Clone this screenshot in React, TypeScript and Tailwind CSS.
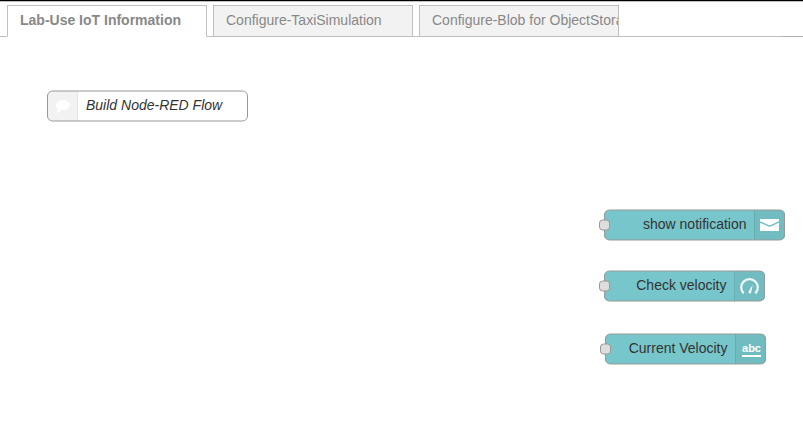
import type { ReactNode } from "react";

type TabProps = { label: string; active?: boolean };

function Tab({ label, active }: TabProps) {
  return (
    <div
      className={`h-8 w-[200px] shrink-0 overflow-hidden whitespace-nowrap border border-[#bfbfbf] pl-3 leading-[29px] ${
        active ? "border-b-white bg-white font-bold" : "bg-[#f2f2f2]"
      }`}
    >
      {label}
    </div>
  );
}

function NodeOutline({ width }: { width: number }) {
  return (
    <svg width={width} height="32" className="pointer-events-none absolute inset-0" fill="none" stroke="#999999">
      <rect x="0.5" y="1" width={width - 1} height="30" rx="5" />
    </svg>
  );
}

function Port() {
  return (
    <svg width="11" height="12" viewBox="0 0 11 12" className="absolute top-[10px] -left-[5px]">
      <rect x="0.5" y="1" width="10" height="10" rx="3" fill="#dddddd" stroke="#999999" />
    </svg>
  );
}

type NodeProps = { label: string; place: string; width: number; icon: ReactNode };

function WidgetNode({ label, place, width, icon }: NodeProps) {
  return (
    <div className={`absolute h-8 py-px ${place}`}>
      <div className="flex h-[30px] overflow-hidden rounded-[5px] bg-[#77c6cb]">
        <div className="flex-1 pr-[7.5px] text-right leading-[29px] whitespace-nowrap text-[#333333]">
          {label}
        </div>
        <div className="w-[31px] border-l border-[#68adb2] bg-[#71bcc1]">{icon}</div>
      </div>
      <NodeOutline width={width} />
      <Port />
    </div>
  );
}

function EnvelopeIcon() {
  return (
    <svg width="30" height="30" viewBox="0 0 30 30">
      <path d="M5 9h19v2.200l-9.500 4.200L5 11.200z" fill="#fff" />
      <path d="M5 12.700l9.500 4.300 9.500-4.300V21H5z" fill="#fff" />
    </svg>
  );
}

function GaugeIcon() {
  return (
    <svg width="30" height="30" viewBox="0 0 30 30" fill="none" stroke="#f1f8f9">
      <path d="M8.700 22.400A8.300 8.300 0 1 1 20.300 22.400" strokeWidth="2.200" />
      <path d="M17.800 13.500L16.200 21.300a1.400 1.400 0 1 1-2.500-1.100z" fill="#f1f8f9" stroke="none" />
    </svg>
  );
}

function AbcIcon() {
  return (
    <div className="mt-[9px] ml-[6px] h-[14px] w-[19px] border-b-2 border-white text-center text-[11px] leading-[11px] font-bold text-white">
      abc
    </div>
  );
}

export default function App() {
  return (
    <div className="flex h-[433px] w-[803px] flex-col overflow-hidden bg-white font-['Liberation_Sans',Arial,sans-serif] text-[14px]">
      <div className="h-px shrink-0 bg-black" />
      <div className="h-px shrink-0 bg-[#bfbfbf]" />
      <nav className="flex h-[35px] shrink-0 items-end text-[#888888]">
        <div className="h-px w-[7px] bg-[#bfbfbf]" />
        <Tab label="Lab-Use IoT Information" active />
        <div className="h-px w-1.5 bg-[#bfbfbf]" />
        <Tab label="Configure-TaxiSimulation" />
        <div className="h-px w-1.5 bg-[#bfbfbf]" />
        <Tab label="Configure-Blob for ObjectStorage" />
        <div className="h-px flex-1 bg-[#bfbfbf]" />
        <div className="h-px w-[22px] bg-[#b0b0b0]" />
      </nav>
      <main className="relative flex-1">
        <div className="absolute top-[53px] left-[47px] h-8 w-[201px] py-px">
          <div className="flex h-[30px] overflow-hidden rounded-[5px] bg-white">
            <div className="w-[31px] border-r border-[#e6e6e6] bg-[#f2f2f2]">
              <svg width="30" height="30" viewBox="0 0 30 30">
                <path
                  d="M16 9.200c4 0 7 2.100 7 4.900s-3 5-7 5c-.7 0-1.300-.1-1.900-.2-1.200 1.500-2.900 2.600-5.600 2.900 1.300-1 2.100-2.400 2.200-3.900-1.100-.9-1.700-2.200-1.700-3.700C9 11.400 12 9.200 16 9.200z"
                  fill="#fff"
                />
              </svg>
            </div>
            <span className="pl-2 leading-[28px] whitespace-nowrap text-[#333333] italic">Build Node-RED Flow</span>
          </div>
          <NodeOutline width={201} />
        </div>
        <WidgetNode label="show notification" place="top-[172px] left-[604px] w-[181px]" width={181} icon={<EnvelopeIcon />} />
        <WidgetNode label="Check velocity" place="top-[233px] left-[604px] w-[161px]" width={161} icon={<GaugeIcon />} />
        <WidgetNode label="Current Velocity" place="top-[296px] left-[605px] w-[161px]" width={161} icon={<AbcIcon />} />
      </main>
    </div>
  );
}
